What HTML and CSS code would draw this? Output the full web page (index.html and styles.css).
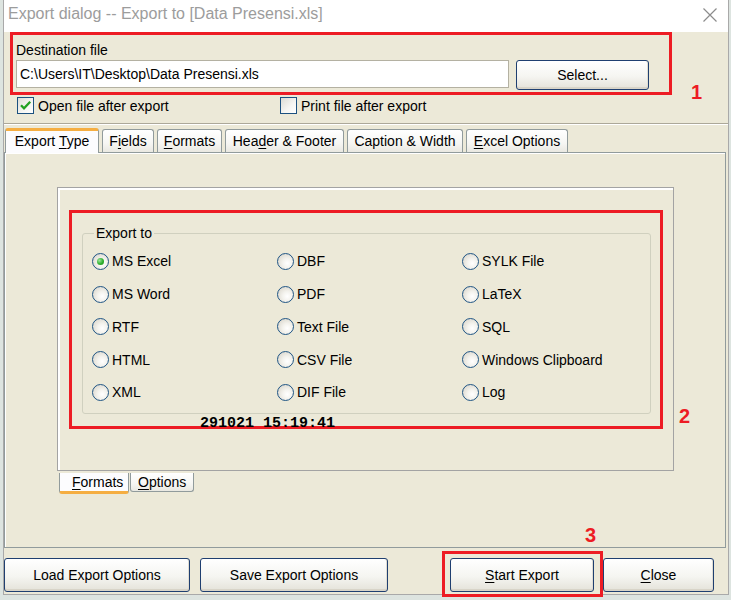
FILE: index.html
```html
<!DOCTYPE html>
<html>
<head>
<meta charset="utf-8">
<title>Export dialog</title>
<link rel="stylesheet" href="styles.css">
</head>
<body>
<div class="dialog">
  <div class="titlebar">
    <span class="title">Export dialog -- Export to [Data Presensi.xls]</span>
    <svg class="close" width="16" height="16" viewBox="0 0 16 16"><path d="M1.5 1.5 L14.5 14.5 M14.5 1.5 L1.5 14.5" stroke="#8c8c8c" stroke-width="1.2" fill="none"/></svg>
  </div>
  <div class="main">
    <div class="dest-row">
      <div class="mark dest">
        <div class="dest-label">Destination file</div>
        <div class="dest-controls">
          <div class="input">C:\Users\IT\Desktop\Data Presensi.xls</div>
          <button class="btn btn-select">Select...</button>
        </div>
      </div>
      <span class="num num1">1</span>
    </div>
    <div class="checks">
      <div class="check check-open"><span class="box"><svg width="15" height="15" viewBox="0 0 15 15"><path d="M3 7.2 L6 10.3 L12.2 3.8" stroke="#21a121" stroke-width="2.3" fill="none"/></svg></span><span>Open file after export</span></div>
      <div class="check"><span class="box"></span><span>Print file after export</span></div>
    </div>
    <div class="sep"></div>
    <div class="tabs">
      <div class="tab active t-type">Export <u>T</u>ype</div>
      <div class="tab t-fields">F<u>i</u>elds</div>
      <div class="tab t-formats"><u>F</u>ormats</div>
      <div class="tab t-header">Hea<u>d</u>er &amp; Footer</div>
      <div class="tab t-caption">Caption &amp; Width</div>
      <div class="tab t-excel"><u>E</u>xcel Options</div>
    </div>
    <div class="panel">
      <div class="page">
        <div class="mark area">
          <fieldset class="group">
            <legend>Export to</legend>
            <div class="radios">
              <label class="radio"><span class="dot on"></span>MS Excel</label>
              <label class="radio"><span class="dot"></span>DBF</label>
              <label class="radio"><span class="dot"></span>SYLK File</label>
              <label class="radio"><span class="dot"></span>MS Word</label>
              <label class="radio"><span class="dot"></span>PDF</label>
              <label class="radio"><span class="dot"></span>LaTeX</label>
              <label class="radio"><span class="dot"></span>RTF</label>
              <label class="radio"><span class="dot"></span>Text File</label>
              <label class="radio"><span class="dot"></span>SQL</label>
              <label class="radio"><span class="dot"></span>HTML</label>
              <label class="radio"><span class="dot"></span>CSV File</label>
              <label class="radio"><span class="dot"></span>Windows Clipboard</label>
              <label class="radio"><span class="dot"></span>XML</label>
              <label class="radio"><span class="dot"></span>DIF File</label>
              <label class="radio"><span class="dot"></span>Log</label>
            </div>
          </fieldset>
        </div>
        <span class="stamp">291021 15:19:41</span>
        <span class="num num2">2</span>
      </div>
      <div class="subtabs">
        <div class="subtab active"><u>F</u>ormats</div>
        <div class="subtab"><u>O</u>ptions</div>
      </div>
    </div>
    <div class="buttons">
      <button class="btn b-load">Load Export Options</button>
      <button class="btn b-save">Save Export Options</button>
      <div class="mark start-mark">
        <button class="btn b-start"><u>S</u>tart Export</button>
        <span class="num num3">3</span>
      </div>
      <button class="btn b-close"><u>C</u>lose</button>
    </div>
  </div>
</div>
</body>
</html>
```
FILE: styles.css
```css
* { box-sizing: border-box; }
html, body { margin: 0; padding: 0; }
body {
  width: 731px; height: 600px; overflow: hidden;
  background: #dde4e0;
  font-family: "Liberation Sans", Arial, sans-serif;
  font-size: 14px; line-height: 16px; color: #000;
}
u { text-decoration: underline; text-underline-offset: 2px; }

.dialog {
  position: relative;
  margin-left: 3px; width: 726px; height: 595px;
  background: #ece9d8;
  border: 1px solid #a9a9a9; border-top: none;
  display: flex; flex-direction: column;
}
.titlebar {
  flex: none; height: 32px; background: #fff;
  display: flex; justify-content: space-between; align-items: flex-start;
  padding: 5px 10px 0 4px;
}
.title { font-size: 16px; line-height: 18px; color: #9c9c9c; white-space: nowrap; }
.close { margin-top: 2px; }

.main { flex: 1; display: flex; flex-direction: column; min-height: 0; }
.mark { border: 3px solid #ed1c24; }
.num { font-weight: bold; font-size: 20px; line-height: 20px; color: #ed1c24; }

.dest-row { flex: none; height: 63px; display: flex; align-items: flex-end; padding-left: 6px; }
.dest { width: 662px; height: 63px; padding: 7px 0 0 3px; }
.dest-controls { display: flex; align-items: flex-start; gap: 7px; margin-top: 2px; }
.input {
  width: 493px; height: 28px; background: #fff;
  border: 1px solid #b4b1a2; padding: 5px 3px; white-space: nowrap;
}
.num1 { margin-left: 19px; margin-bottom: -7px; }

.btn {
  font: inherit; color: #000; padding: 0; margin: 0;
  border: 1px solid #1f3f70; border-radius: 3px;
  background: linear-gradient(#ffffff, #f5f5f1 55%, #e4e2d9);
  box-shadow: inset 0 -2px 0 #d8d4c8, inset -1px 0 0 #e0ddd2;
  display: flex; align-items: center; justify-content: center;
  white-space: nowrap;
}
.btn-select { width: 133px; height: 30px; }

.checks { flex: none; height: 17px; margin-top: 2px; display: flex; padding-left: 13px; }
.check { display: flex; align-items: center; gap: 4px; white-space: nowrap; }
.check-open { width: 263px; }
.box {
  width: 17px; height: 17px; flex: none;
  border: 1px solid #1c5180;
  background: linear-gradient(135deg, #dcdcd5, #f6f6f3 60%, #fff);
  display: flex; align-items: center; justify-content: center;
}

.sep { flex: none; height: 2px; margin-top: 9px; border-top: 1px solid #aca899; background: #fff; }

.tabs {
  flex: none; height: 24px; margin-top: 3px;
  display: flex; align-items: flex-end; gap: 3px;
  padding-left: 1px; position: relative; z-index: 1;
}
.tab {
  height: 23px; border: 1px solid #919b9c; border-bottom: none;
  border-radius: 3px 3px 0 0;
  background: linear-gradient(#ffffff, #f6f6f3 60%, #e9e8e1);
  text-align: center; padding-top: 3px; white-space: nowrap;
}
.tab.active {
  height: 25px; margin-bottom: -1px;
  background: #fcfcfe;
  border-top: 3px solid #f5ae42;
  padding-top: 2px;
}
.t-type { width: 94px; }
.t-fields { width: 52px; }
.t-formats { width: 65px; }
.t-header { width: 119px; }
.t-caption { width: 116px; }
.t-excel { width: 102px; }

.panel {
  flex: 1; margin-right: 2px;
  border: 1px solid #919b9c;
  box-shadow: inset 1px 1px 0 #fff;
  display: flex; flex-direction: column; align-items: flex-start;
}
.page {
  position: relative;
  margin: 34px 0 0 52px; width: 617px; height: 284px;
  border: 1px solid #a3a3a3;
  box-shadow: inset 1px 1px 0 #fff, inset 2px 2px 0 #fff;
  padding: 22px 0 0 11px;
}
.area { width: 594px; height: 219px; padding: 12px 0 0 10px; }
.group {
  width: 569px; height: 189px; margin: 0;
  padding: 4px 0 0 9px;
  border: 1px solid #d0d0bf; border-radius: 3px;
}
.group legend { padding: 0 2px; margin-left: 2px; line-height: 16px; }
.radios { display: grid; grid-template-columns: 185px 185px 1fr; grid-auto-rows: 32.75px; }
.radio { display: flex; align-items: center; gap: 3px; white-space: nowrap; }
.dot {
  width: 17px; height: 17px; flex: none; border-radius: 50%;
  border: 1px solid #1f5585;
  background: radial-gradient(circle at 62% 62%, #ffffff 0, #f4f3ee 35%, #d3cfc3 100%);
  display: flex; align-items: center; justify-content: center;
}
.dot.on::after {
  content: ""; width: 7px; height: 7px; border-radius: 50%;
  background: radial-gradient(circle at 35% 35%, #9ae69a, #2fb02f 55%, #168a16);
}
.stamp {
  position: absolute; left: 142px; top: 228px; z-index: 2;
  font-family: "Liberation Mono", "Courier New", monospace;
  font-weight: bold; font-size: 15px; line-height: 15px; white-space: nowrap;
}
.num2 { position: absolute; left: 621px; top: 218px; }

.subtabs { display: flex; margin: 2px 0 0 54px; }
.subtab {
  height: 19px; padding: 1px 6px 0 7px;
  border: 1px solid #919b9c; border-top: none;
  border-radius: 0 0 3px 3px;
  background: linear-gradient(#ffffff, #f6f6f3 60%, #e9e8e1);
  white-space: nowrap;
}
.subtab.active {
  width: 70px; height: 21px; padding-left: 12px;
  background: #fcfcfe; border-bottom: 3px solid #f5ae42;
}
.subtab + .subtab { margin-left: 1px; width: 64px; }

.buttons { flex: none; height: 46px; display: flex; align-items: flex-start; padding-top: 10px; }
.b-load { width: 186px; height: 34px; }
.b-save { width: 188px; height: 34px; margin-left: 10px; }
.start-mark { position: relative; margin: -7px 0 0 54px; padding: 4px 6px 2px 5px; }
.b-start { width: 144px; height: 34px; }
.b-close { width: 111px; height: 34px; }
.num3 { position: absolute; left: 140px; top: -29px; }
```
